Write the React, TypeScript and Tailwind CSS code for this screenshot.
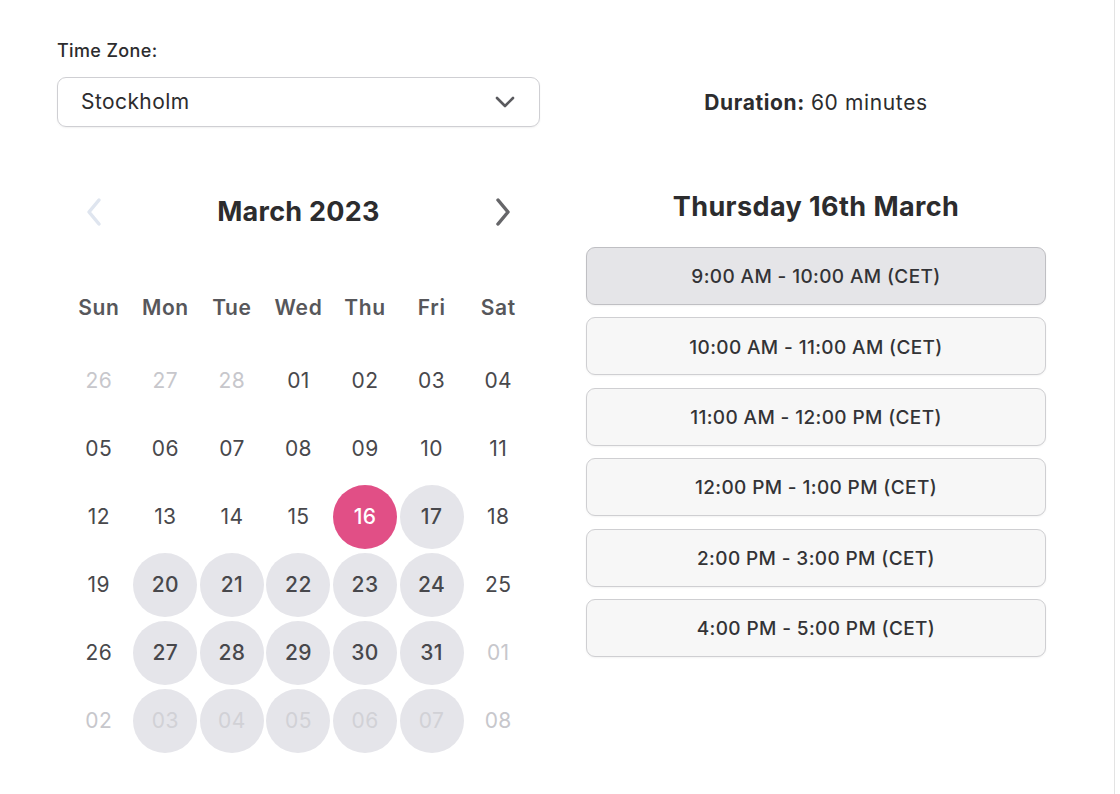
const weekDays = ['Sun', 'Mon', 'Tue', 'Wed', 'Thu', 'Fri', 'Sat']

type Day = { n: string; kind: 'muted' | 'plain' | 'avail' | 'selected' | 'mutedAvail' }

const days: Day[] = [
  { n: '26', kind: 'muted' }, { n: '27', kind: 'muted' }, { n: '28', kind: 'muted' },
  { n: '01', kind: 'plain' }, { n: '02', kind: 'plain' }, { n: '03', kind: 'plain' }, { n: '04', kind: 'plain' },
  { n: '05', kind: 'plain' }, { n: '06', kind: 'plain' }, { n: '07', kind: 'plain' }, { n: '08', kind: 'plain' },
  { n: '09', kind: 'plain' }, { n: '10', kind: 'plain' }, { n: '11', kind: 'plain' },
  { n: '12', kind: 'plain' }, { n: '13', kind: 'plain' }, { n: '14', kind: 'plain' }, { n: '15', kind: 'plain' },
  { n: '16', kind: 'selected' }, { n: '17', kind: 'avail' }, { n: '18', kind: 'plain' },
  { n: '19', kind: 'plain' }, { n: '20', kind: 'avail' }, { n: '21', kind: 'avail' }, { n: '22', kind: 'avail' },
  { n: '23', kind: 'avail' }, { n: '24', kind: 'avail' }, { n: '25', kind: 'plain' },
  { n: '26', kind: 'plain' }, { n: '27', kind: 'avail' }, { n: '28', kind: 'avail' }, { n: '29', kind: 'avail' },
  { n: '30', kind: 'avail' }, { n: '31', kind: 'avail' }, { n: '01', kind: 'muted' },
  { n: '02', kind: 'muted' }, { n: '03', kind: 'mutedAvail' }, { n: '04', kind: 'mutedAvail' }, { n: '05', kind: 'mutedAvail' },
  { n: '06', kind: 'mutedAvail' }, { n: '07', kind: 'mutedAvail' }, { n: '08', kind: 'muted' },
]

const slots = [
  '9:00 AM - 10:00 AM (CET)',
  '10:00 AM - 11:00 AM (CET)',
  '11:00 AM - 12:00 PM (CET)',
  '12:00 PM - 1:00 PM (CET)',
  '2:00 PM - 3:00 PM (CET)',
  '4:00 PM - 5:00 PM (CET)',
]

function DayCell({ day }: { day: Day }) {
  const base = 'w-[64px] h-[64px] rounded-full flex items-center justify-center text-[21px] tracking-[0.02em]'
  if (day.kind === 'selected') {
    return <div className={`${base} bg-[#e14f86] text-white font-medium`}>{day.n}</div>
  }
  if (day.kind === 'avail') {
    return <div className={`${base} bg-[#e5e5ea] text-[#48484c] font-medium`}>{day.n}</div>
  }
  if (day.kind === 'mutedAvail') {
    return <div className={`${base} bg-[#e5e5ea] text-[#d1d1d6]`}>{day.n}</div>
  }
  if (day.kind === 'muted') {
    return <div className={`${base} text-[#c7c7cc]`}>{day.n}</div>
  }
  return <div className={`${base} text-[#48484c]`}>{day.n}</div>
}

export default function App() {
  return (
    <div
      className="w-[1115px] h-[794px] bg-white border-r border-[#e3e3e3] flex pl-[57px]"
      style={{ fontFamily: 'Inter, "Noto Sans", sans-serif' }}
    >
      {/* left column */}
      <div className="w-[483px] pt-[39px]">
        <div className="h-[24px] leading-[24px] text-[18px] tracking-[0.02em] text-[#2c2c2e] font-medium">Time Zone:</div>
        <div className="mt-[14px] h-[50px] rounded-[9px] border border-[#cfcfd3] shadow-[0_1px_2px_rgba(0,0,0,0.06)] flex items-center justify-between pl-[23px] pr-[24px]">
          <span className="text-[21px] tracking-[0.02em] text-[#2c2c2e]">Stockholm</span>
          <svg width="20" height="12" viewBox="0 0 20 12" fill="none">
            <path d="M2 2l8 8 8-8" stroke="#5a5a5e" strokeWidth="2.6" strokeLinecap="round" strokeLinejoin="round" />
          </svg>
        </div>

        <div className="mt-[60px] mx-[8.5px] h-[50px] flex items-center justify-between">
          <div className="w-[56px] flex justify-center">
            <svg width="16" height="30" viewBox="0 0 16 30" fill="none">
              <path d="M13 3L3 15l10 12" stroke="#dfe5ef" strokeWidth="3.5" strokeLinecap="round" strokeLinejoin="round" />
            </svg>
          </div>
          <div className="text-[27px] tracking-[0.01em] font-bold text-[#2c2c2e]">March 2023</div>
          <div className="w-[56px] flex justify-center">
            <svg width="16" height="30" viewBox="0 0 16 30" fill="none">
              <path d="M3 3l10 12L3 27" stroke="#666669" strokeWidth="3.5" strokeLinecap="round" strokeLinejoin="round" />
            </svg>
          </div>
        </div>

        <div className="mx-[8.5px] mt-[51px] grid grid-cols-7 h-[40px] items-center">
          {weekDays.map((d) => (
            <div key={d} className="text-center text-[21px] tracking-[0.03em] font-semibold text-[#57575b]">{d}</div>
          ))}
        </div>

        <div className="mx-[8.5px] mt-[19px] grid grid-cols-7 auto-rows-[68px]">
          {days.map((d, i) => (
            <div key={i} className="flex items-center justify-center">
              <DayCell day={d} />
            </div>
          ))}
        </div>
      </div>

      {/* right column */}
      <div className="w-[460px] ml-[46px] pt-[77px]">
        <div className="h-[52px] flex items-center justify-center text-[21px] tracking-[0.03em] text-[#2c2c2e]">
          <span className="font-bold">Duration:</span>
          <span className="ml-[6px]">60 minutes</span>
        </div>
        <div className="mt-[58px] h-[40px] flex items-center justify-center text-[27px] tracking-[0.015em] font-bold text-[#2c2c2e]">
          Thursday 16th March
        </div>
        <div className="mt-[20px] flex flex-col gap-[12.4px]">
          {slots.map((s, i) => (
            <div
              key={s}
              className={`h-[58px] pt-[3px] rounded-[9px] border flex items-center justify-center text-[19px] tracking-[0.02em] font-medium text-[#333336] shadow-[0_1px_2px_rgba(0,0,0,0.05)] ${
                i === 0 ? 'bg-[#e5e5e8] border-[#bfbfc3]' : 'bg-[#f7f7f7] border-[#cfcfd2]'
              }`}
            >
              {s}
            </div>
          ))}
        </div>
      </div>
    </div>
  )
}
